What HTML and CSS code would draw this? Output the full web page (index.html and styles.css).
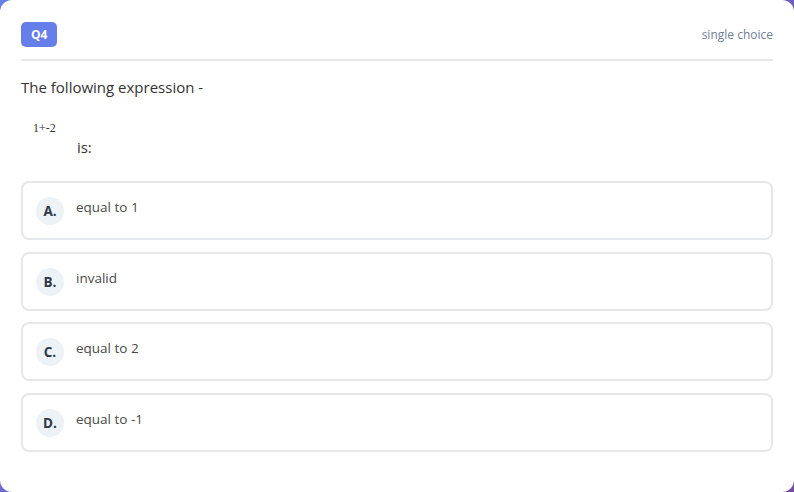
FILE: index.html
```html
<!DOCTYPE html>
<html lang="en">
  <head>
    <meta charset="UTF-8" />
    <meta name="viewport" content="width=device-width, initial-scale=1.0" />
    <title>Question 4</title>
    <link rel="stylesheet" href="styles.css">
  </head>
  <body>
    <div class="card">
      <div class="header">
        <span class="badge">Q4</span>
        <span class="type">single choice</span>
      </div>
      <p class="question">The following expression -</p>
      <p class="expr"><span class="formula">1+-2</span> is:</p>
      <div class="options">
        <div class="option">
          <span class="letter">A.</span>
          <span class="label">equal to 1</span>
        </div>
        <div class="option">
          <span class="letter">B.</span>
          <span class="label">invalid</span>
        </div>
        <div class="option">
          <span class="letter">C.</span>
          <span class="label">equal to 2</span>
        </div>
        <div class="option">
          <span class="letter">D.</span>
          <span class="label">equal to -1</span>
        </div>
      </div>
    </div>
  </body>
</html>
```

FILE: styles.css
```css
html,
body {
  margin: 0;
  height: 100%;
}
body {
  background: linear-gradient(135deg, #667eea 0%, #764ba2 100%);
  font-family: "Open Sans", "Noto Sans", sans-serif;
}
.card {
  box-sizing: border-box;
  height: 100%;
  background-color: white;
  border-radius: 12px;
  padding: 22px 21px;
}
.header {
  display: flex;
  justify-content: space-between;
  align-items: center;
  padding-bottom: 12px;
  border-bottom: 2px solid #e5e7eb;
}
.badge {
  background-color: #667eea;
  color: white;
  font-size: 12px;
  font-weight: 700;
  line-height: 15px;
  padding: 5px 10px;
  border-radius: 5px;
}
.type {
  font-size: 12px;
  color: #718096;
}
.question {
  margin: 16px 0 0;
  font-size: 15px;
  line-height: 20px;
  color: #333;
}
.expr {
  margin: 24px 0 0;
  font-size: 15px;
  line-height: 20px;
  color: #333;
}
.formula {
  display: inline-block;
  overflow: hidden;
  box-sizing: border-box;
  width: 52px;
  height: 32px;
  padding-left: 12px;
  font-family: "Liberation Serif", serif;
  font-size: 12px;
  line-height: 14px;
}
.options {
  display: flex;
  flex-direction: column;
  gap: 11.5px;
  margin-top: 24px;
}
.option {
  display: flex;
  align-items: flex-start;
  gap: 12px;
  height: 59px;
  box-sizing: border-box;
  padding: 14px 13px;
  border: 2px solid #e5e7eb;
  border-radius: 8px;
}
.letter {
  display: flex;
  align-items: center;
  justify-content: center;
  flex: none;
  width: 28px;
  height: 28px;
  border-radius: 50%;
  background-color: #edf2f7;
  color: #2d3748;
  font-size: 13.5px;
  font-weight: 700;
}
.label {
  font-size: 13.5px;
  line-height: 20px;
  color: #4a4a4a;
}
```
